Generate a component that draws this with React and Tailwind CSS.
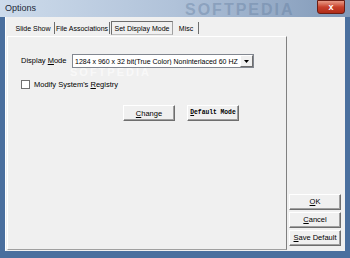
import React from 'react';

// Options dialog, "Set Display Mode" tab
const Btn = ({ children, className = '' }) => (
  <div
    className={`flex items-center justify-center bg-[#f0f0f0] border border-t-white border-l-white border-r-[#6e6e6e] border-b-[#6e6e6e] shadow-[inset_-1px_-1px_0_#a0a0a0] text-[7.5px] text-black leading-none whitespace-nowrap ${className}`}
  >
    {children}
  </div>
);

const tabs = [
  { label: 'Slide Show', w: 'w-[43px]' },
  { label: 'File Associations', w: 'w-[55px]' },
  { label: 'Set Display Mode', w: 'w-[62px]', active: true },
  { label: 'Misc', w: 'w-[25px]' },
];

export default function App() {
  return (
    <div
      className="w-[350px] h-[258px] flex flex-col bg-[#4a6f9e] overflow-hidden"
      style={{ fontFamily: '"Liberation Sans", Arial, sans-serif' }}
    >
      {/* Title bar */}
      <div className="relative h-[17px] bg-gradient-to-r from-[#cddbeb] via-[#b0c2d9] to-[#8199b8] flex items-center pl-[5px]">
        <span className="text-[9px] text-[#1b2838]">Options</span>
        <span className="absolute left-[185px] top-[-2px] text-[16px] font-bold tracking-[2px] text-[#5f7a9c]/40">SOFTPEDIA</span>
        <div className="absolute right-[5px] top-0 w-[28px] h-[14px] rounded-b-[3px] border border-[#6b1d14] bg-gradient-to-b from-[#e89a86] via-[#c8412c] to-[#b02c18] flex items-center justify-center">
          <span className="text-white text-[9px] font-bold leading-none">x</span>
        </div>
      </div>

      {/* Client */}
      <div className="flex-1 mx-[5px] mb-[7px] bg-[#f0f0f0] border-l border-white flex pt-[4px] pb-[1px]">
        <div className="w-[280px] ml-[1px] flex flex-col">
          {/* Tab strip */}
          <div className="h-[14px] flex items-stretch pl-[5px] text-[7px] text-black leading-none whitespace-nowrap">
            {tabs.map((t) =>
              t.active ? (
                <div key={t.label} className={`${t.w} mx-[1px] flex items-center justify-center border border-[#6e6e6e] border-b-[#c0c0c0] border-r-[#a0a0a0] bg-[#f0f0f0]`}>
                  {t.label}
                </div>
              ) : (
                <div key={t.label} className={`${t.w} my-[1px] flex items-center justify-center border-r border-r-[#6e6e6e]`}>
                  {t.label}
                </div>
              )
            )}
          </div>

          {/* Panel */}
          <div className="relative mt-[1px] flex-1 border border-t-white border-l-white border-r-[#808080] border-b-[#a0a0a0] flex flex-col">
            <span className="absolute left-[62px] top-[30px] text-[11px] leading-none font-bold tracking-[2px] text-white/60">SOFTPEDIA</span>

            <div className="relative flex items-center mt-[17px] ml-[13px]">
              <span className="w-[51px] text-[7.5px] text-black whitespace-nowrap">
                Display <span className="underline">M</span>ode
              </span>
              <div className="w-[182px] h-[14px] bg-white border border-[#828790] flex items-center">
                <span className="flex-1 text-[7px] text-black pl-[2px] leading-none whitespace-nowrap overflow-hidden">
                  1284 x 960 x 32 bit(True Color) Noninterlaced 60 HZ
                </span>
                <div className="w-[13px] h-[12px] bg-[#f0f0f0] border border-t-white border-l-white border-r-[#6e6e6e] border-b-[#6e6e6e] flex items-center justify-center">
                  <svg width="5" height="3" viewBox="0 0 5 3"><path d="M0 0h5L2.5 3z" fill="#000" /></svg>
                </div>
              </div>
            </div>

            <div className="relative flex items-center mt-[11px] ml-[13px]">
              <div className="w-[9px] h-[9px] bg-white border border-[#707070]" />
              <span className="ml-[4px] text-[7.5px] text-black whitespace-nowrap">
                Modify System's <span className="underline">R</span>egistry
              </span>
            </div>

            <div className="flex mt-[15px] ml-[115px] gap-[12px]">
              <Btn className="w-[52px] h-[16px]">
                <span className="underline">C</span>hange
              </Btn>
              <Btn className="w-[52px] h-[16px]">
                <span className="text-[6.3px] font-bold" style={{ fontFamily: '"Liberation Mono", "Courier New", monospace' }}>
                  <span className="underline">D</span>efault Mode
                </span>
              </Btn>
            </div>
          </div>
        </div>

        {/* Right buttons */}
        <div className="ml-[2px] flex flex-col justify-end gap-[2px] pb-[4px]">
          <Btn className="w-[52px] h-[16px]">
            <span className="underline">O</span>K
          </Btn>
          <Btn className="w-[52px] h-[16px]">
            <span className="underline">C</span>ancel
          </Btn>
          <Btn className="w-[52px] h-[16px]">
            <span className="underline">S</span>ave Default
          </Btn>
        </div>
      </div>
    </div>
  );
}
